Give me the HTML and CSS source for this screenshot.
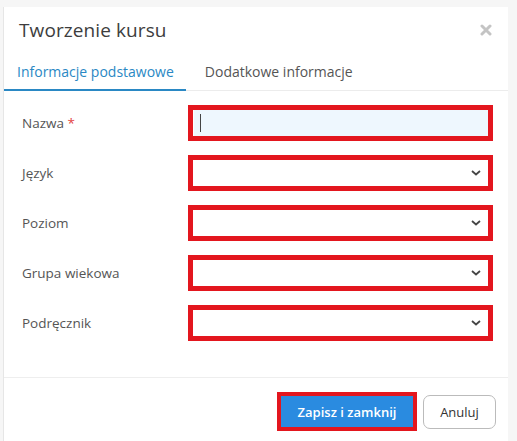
FILE: index.html
```html
<!DOCTYPE html>
<html lang="pl">
<head>
    <meta charset="UTF-8">
    <meta name="viewport" content="width=device-width, initial-scale=1.0">
    <title>Tworzenie kursu</title>
    <link rel="stylesheet" href="styles.css">
</head>
<body>
    <div class="modal">
        <div class="modal-header">
            <h1>Tworzenie kursu</h1>
            <svg class="close" width="12" height="12" viewBox="0 0 12 12"><path d="M2 2l8 8M10 2l-8 8" stroke="#c4c4c4" stroke-width="3" stroke-linecap="round"/></svg>
        </div>
        <div class="tabs">
            <div class="tab active">Informacje podstawowe</div>
            <div class="tab">Dodatkowe informacje</div>
        </div>
        <form class="modal-body">
            <div class="form-row">
                <label for="nazwa">Nazwa <span class="req">*</span></label>
                <div class="mark"><input type="text" id="nazwa" class="field focus"></div>
            </div>
            <div class="form-row">
                <label for="jezyk">Język</label>
                <div class="mark"><select id="jezyk" class="field"></select></div>
            </div>
            <div class="form-row">
                <label for="poziom">Poziom</label>
                <div class="mark"><select id="poziom" class="field"></select></div>
            </div>
            <div class="form-row">
                <label for="grupa">Grupa wiekowa</label>
                <div class="mark"><select id="grupa" class="field"></select></div>
            </div>
            <div class="form-row">
                <label for="podrecznik">Podręcznik</label>
                <div class="mark"><select id="podrecznik" class="field"></select></div>
            </div>
        </form>
        <div class="modal-footer">
            <div class="mark btn-mark"><button type="button" class="btn btn-primary">Zapisz i zamknij</button></div>
            <button type="button" class="btn btn-default">Anuluj</button>
        </div>
    </div>
</body>
</html>
```
FILE: styles.css
```css
body { margin: 0; padding: 7px 9px 0 3px; background: #f6f6f6; font-family: 'Open Sans', 'Noto Sans', sans-serif; color: #555; }
.modal { background: #fff; height: 434px; border-left: 1px solid #e6e6e6; display: flex; flex-direction: column; }
.modal-header { display: flex; align-items: center; justify-content: space-between; padding: 5px 16px 0 15px; height: 36px; }
h1 { margin: 0; font-size: 19px; font-weight: 400; color: #3d3d3d; letter-spacing: 0.1px; }
.tabs { display: flex; border-bottom: 1px solid #ececec; margin-top: 12px; }
.tab { padding: 2px 18px 8px 13px; font-size: 14px; color: #555; }
.tab.active { color: #2a88c4; border-bottom: 2px solid #2a88c4; margin-bottom: -1px; padding-right: 12px; }
.tab + .tab { padding-left: 19px; }
.modal-body { padding: 14px 15px 0 18px; flex: 1; display: flex; flex-direction: column; gap: 14px; border-bottom: 1px solid #eee; margin: 0; }
.form-row { display: flex; align-items: center; height: 36px; }
label { width: 166px; font-size: 13.5px; color: #555; }
.req { color: #e34242; }
.mark { flex: 1; border: 5px solid #e3161e; display: flex; }
.field {
    flex: 1;
    height: 26px;
    border: 0;
    background: #fff;
    box-sizing: border-box;
    appearance: none;
    font-family: inherit;
    padding: 0 10px;
    outline: none;
    background-image: url("data:image/svg+xml,%3Csvg xmlns='http://www.w3.org/2000/svg' width='10' height='6' viewBox='0 0 10 6'%3E%3Cpath d='M1 1l4 3.5L9 1' fill='none' stroke='%23444' stroke-width='1.8'/%3E%3C/svg%3E");
    background-repeat: no-repeat;
    background-position: right 7px center;
}
.field.focus { background: linear-gradient(#444, #444) no-repeat 6px center / 1px 18px, #eef7fe; border-left: 1px solid #fff; }
.modal-footer { display: flex; justify-content: flex-end; align-items: center; gap: 6px; padding: 14px 12px 10px 0; }
.btn-mark { flex: none; border-width: 4px; }
.btn { font-family: inherit; font-size: 13px; height: 34px; border-radius: 0; cursor: pointer; }
.btn-primary { background: #2a8be0; color: #fff; border: 0; font-weight: 600; padding: 0 12px; height: 31px; width: 132px; }
.btn-default { background: #fff; color: #333; border: 1px solid #bbb; border-radius: 7px; padding: 0 14px; width: 73px; }
```
